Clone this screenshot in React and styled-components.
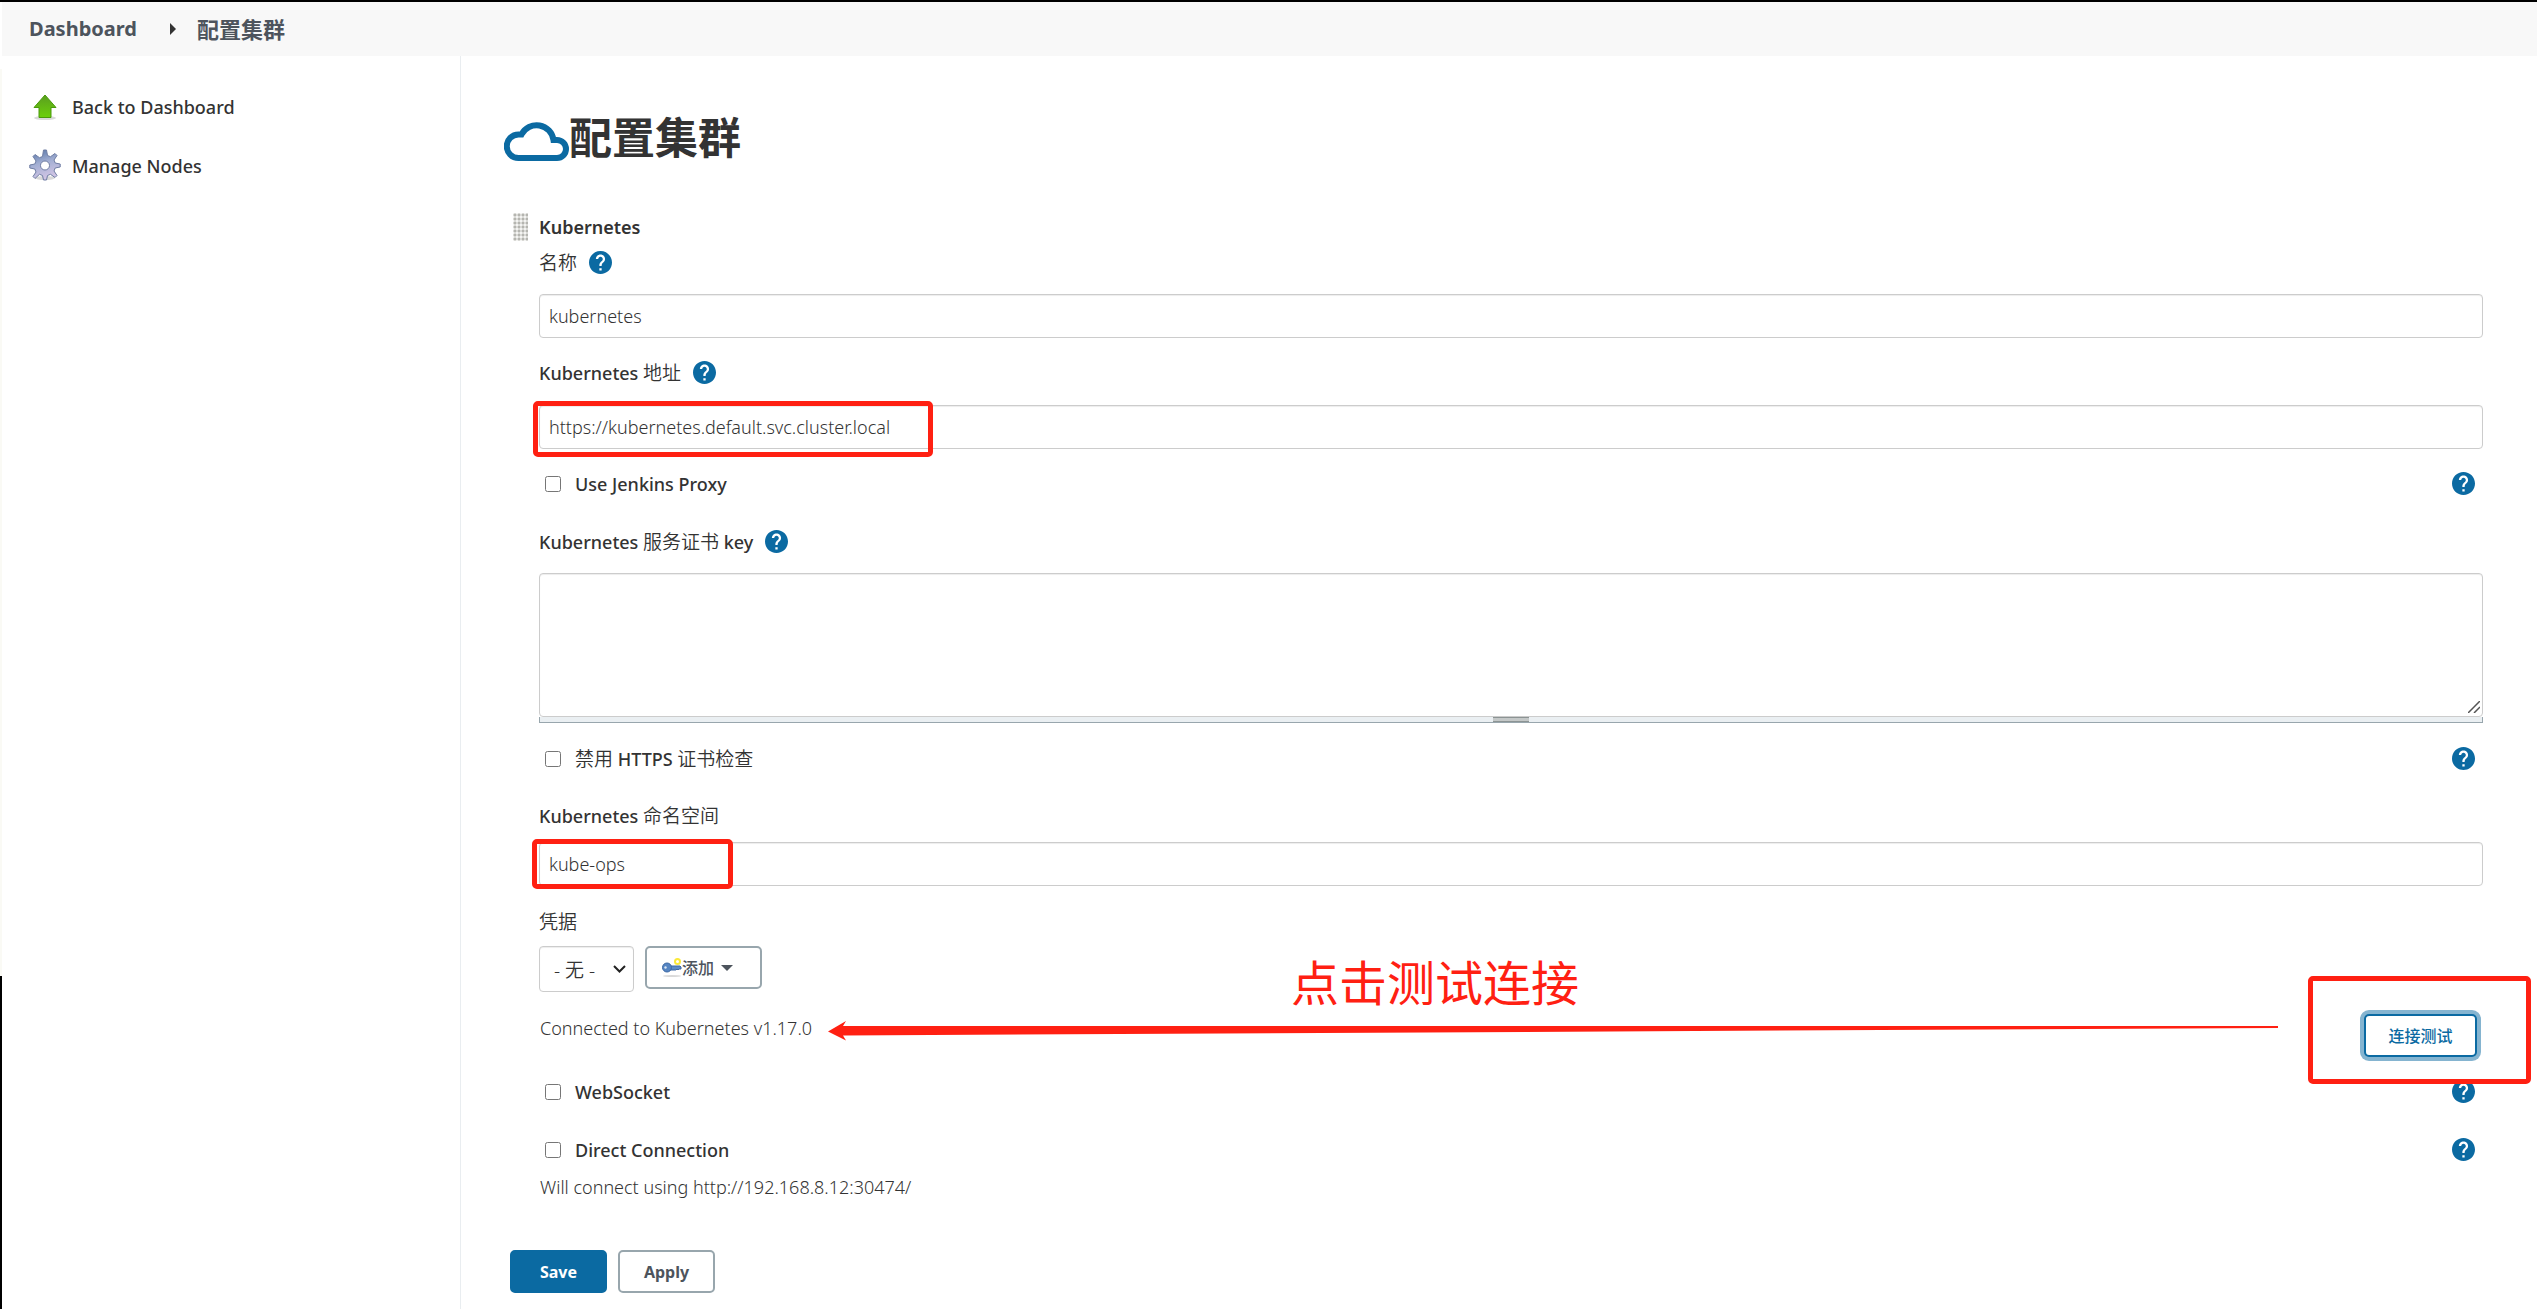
import React from 'react';
import styled, { createGlobalStyle, css } from 'styled-components';

const GlobalStyle = createGlobalStyle`
  * {
    box-sizing: border-box;
  }

  body {
    margin: 0;
    background: #fff;
    color: #333;
    font-family: 'Noto Sans', 'Noto Sans CJK SC', sans-serif;
    font-size: 18px;
    line-height: 28px;
  }

  button, input, select, textarea {
    font: inherit;
    color: inherit;
  }
`;

// --- Page frame ---
const Page = styled.div`
  display: flex;
  flex-direction: column;
  min-height: 100vh;
  padding-left: 2px;
  border-top: 2px solid #000;
  background: linear-gradient(to bottom, #fff 67px, #fafaf5 67px 974px, #000 974px) left top / 2px 100% no-repeat;
`;

const Breadcrumbs = styled.nav`
  display: flex;
  align-items: center;
  height: 54px;
  padding: 0 27px;
  background: #f8f8f8;
  font-size: 20px;
  font-weight: 700;

  a {
    color: #4d545d;
    text-decoration: none;
  }

  a:last-child {
    font-size: 22px;
  }

  svg {
    margin: 0 21px 0 33px;
  }
`;

const Columns = styled.div`
  display: flex;
  flex: 1;
`;

const Sidebar = styled.aside`
  display: flex;
  flex-direction: column;
  gap: 27px;
  flex: 0 0 459px;
  padding: 34px 27px;
  border-right: 1px solid #e9edf0;
`;

const Task = styled.a`
  display: flex;
  align-items: center;
  gap: 11px;
  height: 32px;
  color: #333;
  font-weight: 500;
  line-height: 32px;
  text-decoration: none;

  span {
    padding-top: 2px;
  }
`;

const Main = styled.main`
  flex: 1;
  min-width: 0;
  padding: 50px 54px 16px 43px;
`;

const Title = styled.h1`
  display: flex;
  align-items: center;
  height: 64px;
  margin: 0 0 43px;
  font-size: 43px;
  font-weight: 700;
  line-height: 64px;

  svg {
    margin-top: 5px;
  }
`;

// --- Form parts ---
const Form = styled.form`
  display: flex;
  flex-direction: column;
`;

const Cloud = styled.fieldset`
  min-width: 0;
  margin: 0;
  padding: 0 0 0 35px;
  border: 0;
`;

const CloudHead = styled.div`
  display: flex;
  align-items: center;
  gap: 11px;
  height: 28px;
  margin-left: -26px;
  font-weight: 600;
`;

const Handle = styled.span`
  width: 15px;
  height: 28px;
  background: radial-gradient(circle at 2px 2px, #b5b5b0 1px, #f4f4f2 2px) 0 0 / 4px 4px;
`;

const Han = styled.span`
  font-size: 19px;
  font-weight: 350;
`;

const LabelRow = styled.div`
  display: flex;
  align-items: center;
  gap: 12px;
  height: 28px;
  margin: ${(p) => p.$margin};
  font-weight: 500;
`;

const control = css`
  border: 1px solid #ccc;
  border-radius: 4px;
  background: #fff;
  box-shadow: inset 0 1px 1px rgba(0, 0, 0, 0.075);
  font-weight: 350;
`;

const Field = styled.div`
  position: relative;
`;

const TextInput = styled.input`
  ${control}
  display: block;
  width: 100%;
  height: 44px;
  padding: 0 9px;
`;

const TextArea = styled.textarea`
  ${control}
  display: block;
  width: 100%;
  height: 144px;
  padding: 8px;
  resize: none;
`;

const Grip = styled.svg`
  position: absolute;
  right: 3px;
  bottom: 4px;
  pointer-events: none;
`;

const ResizeBar = styled.div`
  display: flex;
  justify-content: center;
  height: 6px;
  border: 1px solid #98a6ad;
  border-top: 0;
  background: #eaeff2;

  &::after {
    content: '';
    width: 36px;
    border: solid #8c9494;
    border-width: 1px 0;
    background: #c4c8c8;
  }
`;

const CheckRow = styled.div`
  display: flex;
  align-items: center;
  justify-content: space-between;
  height: 28px;
  margin: ${(p) => p.$margin};
  padding: 0 8px 0 6px;

  label {
    display: flex;
    align-items: center;
    gap: 14px;
    font-weight: 500;
  }

  input {
    width: 16px;
    height: 16px;
    margin: 0;
  }
`;

const HelpButton = styled.button`
  display: block;
  width: 23px;
  height: 23px;
  margin-bottom: 2px;
  padding: 0;
  border: 0;
  background: none;
  line-height: 0;
  cursor: pointer;
`;

const Credentials = styled.div`
  display: flex;
  gap: 11px;
`;

const SelectBox = styled.div`
  display: grid;
  align-items: center;
  width: 95px;

  > * {
    grid-area: 1 / 1;
  }

  svg {
    justify-self: end;
    margin-right: 8px;
    pointer-events: none;
  }
`;

const Select = styled.select`
  ${control}
  appearance: none;
  width: 100%;
  height: 46px;
  padding: 2px 0 0 14px;
  font-size: 19px;
`;

const Button = styled.button`
  display: flex;
  align-items: center;
  justify-content: center;
  min-width: 97px;
  height: 43px;
  padding: 0 16px;
  border: 2px solid #98a6ad;
  border-radius: 5px;
  background: #fff;
  color: #4d545d;
  font-size: 16px;
  font-weight: 700;
  line-height: 24px;
  cursor: pointer;

  ${(p) => p.$primary && css`
    border-color: #0b6aa2;
    background: #0b6aa2;
    color: #fff;
  `}

  ${(p) => p.$add && css`
    justify-content: flex-start;
    width: 117px;
    padding: 0 15px;
    font-weight: 500;
  `}

  ${(p) => p.$focused && css`
    width: 113px;
    border-color: #0b6aa2;
    color: #0b6aa2;
    font-weight: 500;
    box-shadow: 0 0 0 4px #85b4d0;
  `}
`;

const TestRow = styled.div`
  position: relative;
  display: flex;
  align-items: flex-start;
  justify-content: space-between;
  height: 43px;
  margin-top: 22px;
  padding-right: 6px;
`;

const Status = styled.span`
  padding-left: 1px;
  font-weight: 350;
`;

const Actions = styled.div`
  display: flex;
  gap: 11px;
  margin: 49px 0 0 6px;
`;

// --- Red marks drawn over the form ---
const Mark = styled.div`
  position: absolute;
  border: 5px solid #ff2012;
  border-radius: 5px;
  pointer-events: none;
`;

const UrlMark = styled(Mark)`
  top: -4px;
  left: -6px;
  width: 400px;
  height: 56px;
`;

const NamespaceMark = styled(Mark)`
  top: -3px;
  left: -7px;
  width: 201px;
  height: 50px;
`;

const TestMark = styled(Mark)`
  top: -38px;
  right: -48px;
  width: 223px;
  height: 108px;
`;

const Note = styled.span`
  position: absolute;
  top: -67px;
  left: calc(50% - 220px);
  color: #ff2012;
  font-size: 48px;
  font-weight: 400;
  line-height: 72px;
`;

const Arrow = styled.svg`
  position: absolute;
  top: 7px;
  left: 289px;
  width: calc(100% - 494px);
  height: 20px;
`;

// --- Icons ---
const Help = ({ topic }) => (
  <HelpButton type="button" aria-label={`Help for feature: ${topic}`}>
    <svg width="23" height="23" viewBox="2 2 20 20">
      <path
        fill="#0b6aa2"
        d="M12 2C6.48 2 2 6.48 2 12s4.48 10 10 10 10-4.480 10-10S17.520 2 12 2zm1 17h-2v-2h2v2zm2.070-7.750l-.9.920C13.450 12.900 13 13.500 13 15h-2v-.5c0-1.100.45-2.100 1.170-2.830l1.240-1.260c.37-.36.59-.86.59-1.410 0-1.100-.9-2-2-2s-2 .9-2 2H8c0-2.210 1.790-4 4-4s4 1.790 4 4c0 .88-.36 1.680-.93 2.250z"
      />
    </svg>
  </HelpButton>
);

const CloudIcon = () => (
  <svg width="65" height="42" viewBox="0 0 65 42" fill="none" stroke="#0b6aa2" strokeWidth="6">
    <path d="M14.500 38H53a9 9 0 0 0 0-18H49.500A17 17 0 0 0 17.500 14.500H14.500a11.750 11.750 0 0 0 0 23.500z" />
  </svg>
);

const UpIcon = () => (
  <svg width="32" height="32" viewBox="0 0 32 32">
    <defs>
      <linearGradient id="up" x1="0" y1="0" x2="0" y2="1">
        <stop offset="0" stopColor="#5a9e20" />
        <stop offset="1" stopColor="#6cd00a" />
      </linearGradient>
    </defs>
    <ellipse cx="16" cy="28" rx="11" ry="2" fill="#000" opacity="0.15" />
    <path d="M16 5L27 17.500H22V27.500H10V17.500H5z" fill="url(#up)" stroke="#4a9a0c" />
  </svg>
);

const GearIcon = () => (
  <svg width="32" height="32" viewBox="0 0 32 32">
    <defs>
      <linearGradient id="gear" x1="0" y1="0" x2="0.3" y2="1">
        <stop offset="0" stopColor="#4f70a3" />
        <stop offset="0.5" stopColor="#a3afd3" />
        <stop offset="1" stopColor="#d0c4e4" />
      </linearGradient>
    </defs>
    <ellipse cx="16" cy="29" rx="10" ry="2" fill="#000" opacity="0.15" />
    <path
      fill="url(#gear)"
      stroke="#6f7da3"
      strokeLinejoin="round"
      fillRule="evenodd"
      d="M14.500 1h3l1 5.500 3 1.200 4.500-3.200 2 2-3 4.500 1.200 3 5 1v3l-5 1-1.200 3 3 4.500-2 2-4.500-3.200-3 1.200-1 4.500h-3l-1-4.500-3-1.200L6 29.500l-2-2 3-4.500-1.200-3-5-1v-3l5-1 1.200-3-3-4.500 2-2 4.500 3.200 3-1.200zM16 12a4.500 4.500 0 1 0 0 9 4.500 4.500 0 1 0 0-9z"
    />
  </svg>
);

const KeyIcon = () => (
  <svg width="20" height="20" viewBox="0 0 20 20">
    <ellipse cx="10" cy="18" rx="9" ry="1" fill="#000" opacity="0.15" />
    <circle cx="15.500" cy="3.500" r="2.500" fill="none" stroke="#fbe93a" strokeWidth="2" />
    <path d="M8 8h10l1 1v2h-2l-1 1-1-1-1 1H8z" fill="#5b8ac6" stroke="#3c69a5" />
    <circle cx="5" cy="9.500" r="4.500" fill="#5585c2" stroke="#3c69a5" />
    <circle cx="3.500" cy="9.500" r="1.200" fill="#dce8f5" />
  </svg>
);

const CaretRight = () => (
  <svg width="6" height="12" viewBox="0 0 6 12">
    <path d="M0 0l6 6-6 6z" fill="#333" />
  </svg>
);

const CaretDown = () => (
  <svg width="26" height="8" viewBox="0 0 26 8">
    <path d="M7 1h12l-6 6z" fill="#4d545d" />
  </svg>
);

const Chevron = () => (
  <svg width="13" height="8" viewBox="0 0 13 8">
    <path d="M1 1l5.500 5.500L12 1" fill="none" stroke="#222" strokeWidth="2" />
  </svg>
);

const Check = ({ id, topic, margin, children }) => (
  <CheckRow $margin={margin}>
    <label htmlFor={id}>
      <input type="checkbox" id={id} />
      <span>{children}</span>
    </label>
    <Help topic={topic} />
  </CheckRow>
);

const App = () => (
  <>
    <GlobalStyle />
    <Page>
      <Breadcrumbs>
        <a href="#dashboard">Dashboard</a>
        <CaretRight />
        <a href="#clouds">配置集群</a>
      </Breadcrumbs>
      <Columns>
        <Sidebar>
          <Task href="#dashboard"><UpIcon /><span>Back to Dashboard</span></Task>
          <Task href="#nodes"><GearIcon /><span>Manage Nodes</span></Task>
        </Sidebar>
        <Main>
          <Title><CloudIcon />配置集群</Title>
          <Form>
            <Cloud>
              <CloudHead><Handle />Kubernetes</CloudHead>

              <LabelRow $margin="8px 0 17px">
                <label htmlFor="name"><Han>名称</Han></label>
                <Help topic="名称" />
              </LabelRow>
              <TextInput id="name" defaultValue="kubernetes" />

              <LabelRow $margin="21px 0 18px">
                <label htmlFor="url">Kubernetes <Han>地址</Han></label>
                <Help topic="Kubernetes 地址" />
              </LabelRow>
              <Field>
                <TextInput id="url" defaultValue="https://kubernetes.default.svc.cluster.local" />
                <UrlMark />
              </Field>

              <Check id="proxy" topic="Use Jenkins Proxy" margin="21px 0 30px">Use Jenkins Proxy</Check>

              <LabelRow $margin="0 0 17px">
                <label htmlFor="cert">Kubernetes <Han>服务证书</Han> key</label>
                <Help topic="Kubernetes 服务证书 key" />
              </LabelRow>
              <Field>
                <TextArea id="cert" />
                <Grip width="12" height="12" viewBox="0 0 12 12" stroke="#555" strokeWidth="1.500">
                  <path d="M0 12L12 0M6 12l6-6" />
                </Grip>
              </Field>
              <ResizeBar />

              <Check id="https" topic="禁用 HTTPS 证书检查" margin="22px 0 29px">
                <Han>禁用</Han> HTTPS <Han>证书检查</Han>
              </Check>

              <LabelRow $margin="0 0 12px">
                <label htmlFor="namespace">Kubernetes <Han>命名空间</Han></label>
              </LabelRow>
              <Field>
                <TextInput id="namespace" defaultValue="kube-ops" />
                <NamespaceMark />
              </Field>

              <LabelRow $margin="22px 0 10px">
                <label htmlFor="credentials"><Han>凭据</Han></label>
              </LabelRow>
              <Credentials>
                <SelectBox>
                  <Select id="credentials">
                    <option>- 无 -</option>
                  </Select>
                  <Chevron />
                </SelectBox>
                <Button type="button" $add><KeyIcon />添加<CaretDown /></Button>
              </Credentials>

              <TestRow>
                <Status>Connected to Kubernetes v1.17.0</Status>
                <Button type="button" $focused>连接测试</Button>
                <Note>点击测试连接</Note>
                <Arrow viewBox="0 0 1450 20" preserveAspectRatio="none">
                  <path d="M0 10.500L18 0L15 5L1450 5V7L15 14.500L18 19.500z" fill="#ff2012" />
                </Arrow>
                <TestMark />
              </TestRow>

              <Check id="websocket" topic="WebSocket" margin="21px 0 30px">WebSocket</Check>
              <Check id="direct" topic="Direct Connection" margin="0 0 9px">Direct Connection</Check>
              <Status>Will connect using http://192.168.8.12:30474/</Status>
            </Cloud>
            <Actions>
              <Button type="submit" $primary>Save</Button>
              <Button type="button">Apply</Button>
            </Actions>
          </Form>
        </Main>
      </Columns>
    </Page>
  </>
);

export default App;
